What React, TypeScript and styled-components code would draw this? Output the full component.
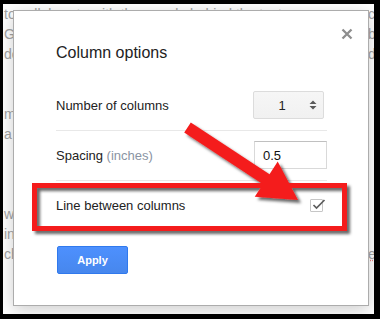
import React from "react";
import styled, { createGlobalStyle } from "styled-components";

const GlobalStyle = createGlobalStyle`
  html, body {
    margin: 0;
    padding: 0;
    background: #000;
  }
  * {
    box-sizing: border-box;
  }
`;

const Frame = styled.div`
  position: relative;
  width: 380px;
  height: 319px;
  padding: 4px 6px 5px 3px;
  background: #000;
  font-family: "Liberation Sans", Arial, sans-serif;
`;

const Page = styled.div`
  position: relative;
  width: 100%;
  height: 100%;
  overflow: hidden;
  background: #fff;
`;

const PageLine = styled.div`
  display: grid;
  grid-template-columns: 365px 60px;
  height: 20px;
  line-height: 20px;
  font-size: 14px;
  color: #a3a3a3;
  white-space: nowrap;
`;

const LineStart = styled.span`
  overflow: hidden;
  padding-left: 1px;
`;

const LineEnd = styled.span<{ $misspelt?: boolean }>`
  text-decoration: ${({ $misspelt }) => ($misspelt ? "underline dotted #f08080" : "none")};
`;

const Dialog = styled.div`
  position: absolute;
  left: 10px;
  top: 6px;
  width: 356px;
  height: 296px;
  padding: 32px 41px 30px 42px;
  background: #fff;
  border: 1px solid #acacac;
  box-shadow: 0 4px 16px rgba(0, 0, 0, 0.2);
  color: #222;
`;

const Title = styled.div`
  font-size: 16px;
  line-height: 20px;
  margin-bottom: 28px;
`;

const CloseButton = styled.button`
  all: unset;
  position: absolute;
  top: 17px;
  right: 15px;
  width: 12px;
  height: 12px;
  display: flex;
  cursor: pointer;
`;

const Row = styled.div`
  display: flex;
  align-items: center;
  justify-content: space-between;
  height: 28px;
  font-size: 13px;
`;

const Hint = styled.span`
  color: #8a94a3;
`;

const Separator = styled.div`
  height: 1px;
  margin: 11px 0 10px;
  background: #e8e8e8;
`;

const Spinner = styled.div`
  display: flex;
  align-items: center;
  width: 71px;
  height: 28px;
  margin-right: 3px;
  border: 1px solid #dcdcdc;
  border-radius: 2px;
  background: linear-gradient(#f6f6f6, #f1f1f1);
  font-size: 13px;
`;

const SpinnerValue = styled.span`
  flex: 1;
  text-align: center;
  padding-left: 2px;
`;

const SpinnerArrows = styled.span`
  display: flex;
  width: 15px;
  padding-right: 6px;
  justify-content: center;
`;

const TextInput = styled.div`
  display: flex;
  align-items: center;
  width: 73px;
  height: 28px;
  padding: 0 8px;
  border: 1px solid #d9d9d9;
  border-top-color: #c0c0c0;
  font-size: 13px;
  color: #111;
`;

const CheckBox = styled.span`
  position: relative;
  width: 13px;
  height: 13px;
  margin-right: 4px;
  border: 1px solid #c6c6c6;
  border-radius: 1px;
  background: #fff;

  svg {
    position: absolute;
    left: 0;
    top: -3px;
  }
`;

const ApplyButton = styled.button`
  all: unset;
  display: flex;
  align-items: center;
  justify-content: center;
  width: 71px;
  height: 28px;
  margin: 27px 0 0 1px;
  border: 1px solid #3079ed;
  border-radius: 2px;
  background: linear-gradient(#4d90fe, #4787ed);
  color: #fff;
  font-size: 11px;
  font-weight: bold;
  box-sizing: border-box;
`;

const Annotation = styled.svg`
  position: absolute;
  left: 0;
  top: 0;
  pointer-events: none;
`;

const pageLines: [string, string, boolean?][] = [
  ["to collaborate with the people behind the text", "co"],
  ["Google Docs makes it easy", "bo"],
  ["documents and the sheets", "da"],
  ["", ""],
  ["", ""],
  ["more columns than one", ""],
  ["a page of text", ""],
  ["", ""],
  ["", ""],
  ["", ""],
  ["work together", ""],
  ["in real time", ""],
  ["check the settings", "e", true],
];

export default function App() {
  return (
    <>
      <GlobalStyle />
      <Frame>
        <Page>
          {pageLines.map(([start, end, misspelt], i) => (
            <PageLine key={i}>
              <LineStart>{start}</LineStart>
              <LineEnd $misspelt={misspelt}>{end}</LineEnd>
            </PageLine>
          ))}

          <Dialog>
            <CloseButton aria-label="Close">
              <svg width="12" height="12" viewBox="0 0 12 12">
                <path d="M1.5 1.5 L10.5 10.5 M10.5 1.5 L1.5 10.5" stroke="#8e8e8e" strokeWidth="2.3" />
              </svg>
            </CloseButton>
            <Title>Column options</Title>

            <Row>
              <span>Number of columns</span>
              <Spinner>
                <SpinnerValue>1</SpinnerValue>
                <SpinnerArrows>
                  <svg width="8" height="10" viewBox="0 0 8 10">
                    <path d="M0.5 4 L4 0.5 L7.5 4 Z M0.5 6 L7.5 6 L4 9.5 Z" fill="#5a5a5a" />
                  </svg>
                </SpinnerArrows>
              </Spinner>
            </Row>
            <Separator />

            <Row>
              <span>
                Spacing <Hint>(inches)</Hint>
              </span>
              <TextInput>0.5</TextInput>
            </Row>
            <Separator />

            <Row>
              <span>Line between columns</span>
              <CheckBox>
                <svg width="16" height="14" viewBox="0 0 16 14">
                  <path d="M2.5 8 L5.5 11 L13.5 3" fill="none" stroke="#5c5c5c" strokeWidth="1.7" />
                </svg>
              </CheckBox>
            </Row>

            <ApplyButton>Apply</ApplyButton>
          </Dialog>
        </Page>

        <Annotation width="380" height="319" viewBox="0 0 380 319">
          <defs>
            <filter id="shadow" x="-10%" y="-10%" width="130%" height="140%">
              <feDropShadow dx="3" dy="3" stdDeviation="1.8" floodColor="#000" floodOpacity="0.6" />
            </filter>
          </defs>
          <g filter="url(#shadow)">
            <rect x="34.5" y="185.5" width="310" height="43" fill="none" stroke="#f41f1f" strokeWidth="5" />
            <polygon
              points="190.8,122.5 269.5,174.2 277.7,161.6 298,200 254.7,196.8 262.9,184.2 184.2,132.5"
              fill="#f41f1f"
            />
          </g>
        </Annotation>
      </Frame>
    </>
  );
}
